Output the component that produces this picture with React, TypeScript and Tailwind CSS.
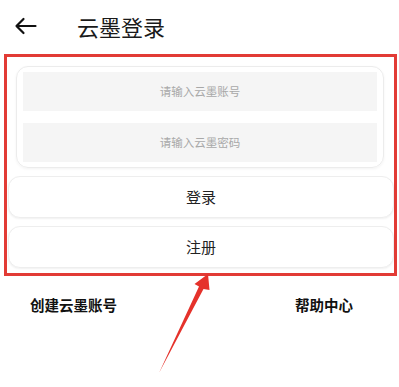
import React from 'react'

const font = { fontFamily: '"Noto Sans CJK SC", "Noto Sans", sans-serif' }

function BackArrow() {
  return (
    <svg width="24" height="18" viewBox="0 0 24 18" fill="none" className="block">
      <path d="M2.5 9H21.5M9.5 2L2.5 9L9.5 16" stroke="#111" strokeWidth="2.2" strokeLinecap="round" strokeLinejoin="round" />
    </svg>
  )
}

function InputBox({ placeholder }: { placeholder: string }) {
  return (
    <div className="flex h-[39px] items-center justify-center bg-[#f5f5f5] text-[11.5px] text-[#a8a8a8]">
      {placeholder}
    </div>
  )
}

function ActionButton({ label }: { label: string }) {
  return (
    <div className="flex h-[42px] items-center justify-center rounded-[12px] border border-[#eeeeee] bg-white text-[15px] text-[#222] shadow-[0_1px_2px_rgba(0,0,0,0.06)]">
      {label}
    </div>
  )
}

export default function App() {
  return (
    <div className="relative h-[387px] w-[399px] overflow-hidden bg-white" style={font}>
      <div className="flex h-[54px] items-center pb-[2px]">
        <div className="ml-[14px] w-[63px]">
          <BackArrow />
        </div>
        <h1 className="text-[22px] font-normal leading-none text-[#1a1a1a]">云墨登录</h1>
      </div>

      <div className="ml-[4px] w-[393px] border-[3px] border-[#e23b35] pb-[5px] pl-[1px] pr-0 pt-[9px]">
        <div className="ml-[8px] mr-[10px] flex flex-col gap-[12px] rounded-[12px] border border-[#ececec] px-[6px] py-[5px] shadow-[0_1px_3px_rgba(0,0,0,0.05)]">
          <InputBox placeholder="请输入云墨账号" />
          <InputBox placeholder="请输入云墨密码" />
        </div>
        <div className="mt-[8px] flex flex-col gap-[8px]">
          <ActionButton label="登录" />
          <ActionButton label="注册" />
        </div>
      </div>

      <div className="mt-[18px] flex items-center text-[14.5px] font-bold text-[#111]">
        <span className="ml-[30px]">创建云墨账号</span>
        <span className="ml-[178px]">帮助中心</span>
      </div>

      <svg className="pointer-events-none absolute left-0 top-0" width="399" height="387" viewBox="0 0 399 387">
        <polygon
          points="208,274 194.5,284 199,286.5 159,373 203.5,289 209.5,290"
          fill="#e5322b"
        />
      </svg>
    </div>
  )
}
